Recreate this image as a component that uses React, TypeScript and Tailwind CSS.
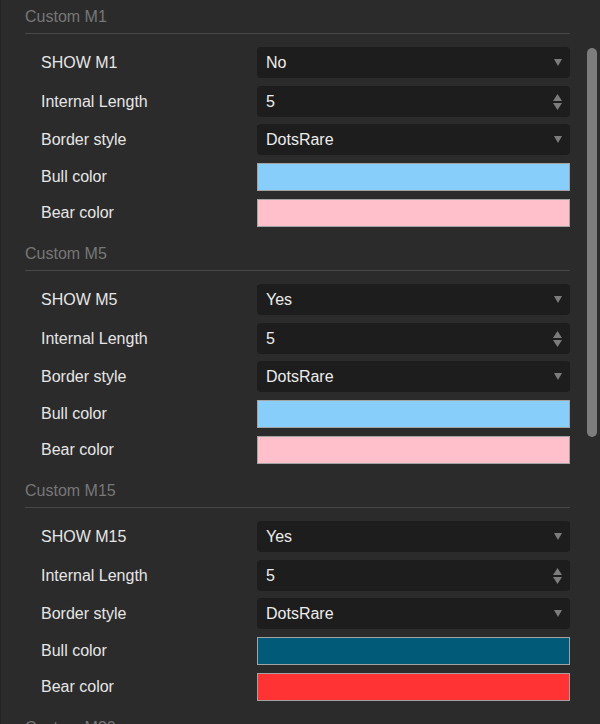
import React from 'react';

type Field =
    | { kind: 'select'; label: string; value: string }
    | { kind: 'number'; label: string; value: string }
    | { kind: 'color'; label: string; color: string };

interface Section {
    title: string;
    fields: Field[];
}

const sections: Section[] = [
    {
        title: 'Custom M1',
        fields: [
            { kind: 'select', label: 'SHOW M1', value: 'No' },
            { kind: 'number', label: 'Internal Length', value: '5' },
            { kind: 'select', label: 'Border style', value: 'DotsRare' },
            { kind: 'color', label: 'Bull color', color: '#87cefa' },
            { kind: 'color', label: 'Bear color', color: '#ffc0cb' },
        ],
    },
    {
        title: 'Custom M5',
        fields: [
            { kind: 'select', label: 'SHOW M5', value: 'Yes' },
            { kind: 'number', label: 'Internal Length', value: '5' },
            { kind: 'select', label: 'Border style', value: 'DotsRare' },
            { kind: 'color', label: 'Bull color', color: '#87cefa' },
            { kind: 'color', label: 'Bear color', color: '#ffc0cb' },
        ],
    },
    {
        title: 'Custom M15',
        fields: [
            { kind: 'select', label: 'SHOW M15', value: 'Yes' },
            { kind: 'number', label: 'Internal Length', value: '5' },
            { kind: 'select', label: 'Border style', value: 'DotsRare' },
            { kind: 'color', label: 'Bull color', color: '#015a77' },
            { kind: 'color', label: 'Bear color', color: '#ff3333' },
        ],
    },
    {
        title: 'Custom M30',
        fields: [],
    },
];

function DownArrow() {
    return (
        <svg width="8" height="7" viewBox="0 0 8 7">
            <path d="M0 0 H8 L4 7 Z" fill="#7c7c7c" />
        </svg>
    );
}

function Spinner() {
    return (
        <div className="flex flex-col gap-[2px]">
            <svg width="9" height="7" viewBox="0 0 9 7">
                <path d="M0 7 H9 L4.5 0 Z" fill="#7c7c7c" />
            </svg>
            <svg width="9" height="7" viewBox="0 0 9 7">
                <path d="M0 0 H9 L4.5 7 Z" fill="#7c7c7c" />
            </svg>
        </div>
    );
}

function FieldRow({ field, index }: { field: Field; index: number }) {
    const isColor = field.kind === 'color';
    const spacing = index === 0 ? '' : index === 2 ? 'mt-[7px]' : 'mt-[8px]';
    return (
        <div className={`flex items-center ${spacing}`}>
            <div className="w-[232px] pl-[16px] text-[16px] text-[#e6e6e6]">{field.label}</div>
            {isColor ? (
                <div
                    className="flex-1 h-[28px] border border-[#a3a3a3]"
                    style={{ backgroundColor: field.color }}
                />
            ) : (
                <div className="flex-1 h-[31px] rounded-[4px] bg-[#1d1d1d] flex items-center justify-between pl-[9px] pr-[8px]">
                    <span className="text-[16px] text-[#ececec]">{field.value}</span>
                    {field.kind === 'select' ? <DownArrow /> : <Spinner />}
                </div>
            )}
        </div>
    );
}

export default function App() {
    return (
        <div
            className="w-[600px] h-[724px] overflow-hidden bg-[#2b2b2b] border-l border-[#232323] flex"
            style={{ fontFamily: '"Liberation Sans", Arial, sans-serif' }}
        >
            {/* Settings list */}
            <div className="w-[569px] pl-[24px] shrink-0">
                {sections.map((section) => (
                    <div key={section.title} className="pb-[10px]">
                        <div className="pt-[7px] pb-[6px] leading-[20px] text-[16px] text-[#777777] border-b border-[#474747]">
                            {section.title}
                        </div>
                        <div className="mt-[13px]">
                            {section.fields.map((field, i) => (
                                <FieldRow key={i} field={field} index={i} />
                            ))}
                        </div>
                    </div>
                ))}
            </div>

            {/* Scrollbar */}
            <div className="pl-[17px] pt-[48px]">
                <div className="w-[10px] h-[389px] rounded-full bg-[#7d7d7d]" />
            </div>
        </div>
    );
}
